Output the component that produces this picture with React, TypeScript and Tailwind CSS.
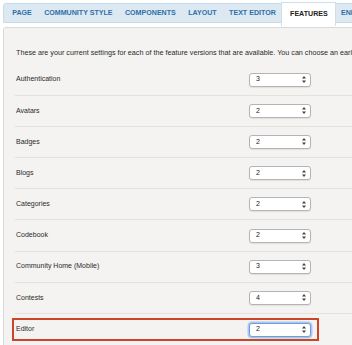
import React from "react";

const tabs = ["PAGE", "COMMUNITY STYLE", "COMPONENTS", "LAYOUT", "TEXT EDITOR", "FEATURES", "ENHANCED"];

const features = [
  { name: "Authentication", value: "3" },
  { name: "Avatars", value: "2" },
  { name: "Badges", value: "2" },
  { name: "Blogs", value: "2" },
  { name: "Categories", value: "2" },
  { name: "Codebook", value: "2" },
  { name: "Community Home (Mobile)", value: "3" },
  { name: "Contests", value: "4" },
  { name: "Editor", value: "2" },
];

const Arrows = () => (
  <svg width="4" height="7" viewBox="0 0 4 7" className="block">
    <path d="M2 0 L4 2.6 L0 2.6 Z" fill="#444" />
    <path d="M2 7 L4 4.4 L0 4.4 Z" fill="#444" />
  </svg>
);

const VersionSelect = ({ value, focused }: { value: string; focused?: boolean }) => (
  <div
    className={`flex h-[14px] w-[62px] items-center justify-between rounded-[3px] border bg-white pl-[6px] pr-[4px] text-[7px] text-[#222] ${
      focused
        ? "border-[#6d9fd8] shadow-[0_0_0_1.5px_#a9c8ef]"
        : "border-[#b4b4b4] shadow-[0_1px_1px_rgba(0,0,0,0.08)]"
    }`}
  >
    <span>{value}</span>
    <Arrows />
  </div>
);

const App: React.FC = () => {
  return (
    <div
      className="relative h-[345px] w-[352px] overflow-hidden bg-white"
      style={{ fontFamily: '"Liberation Sans", Arial, sans-serif' }}
    >
      <div className="w-[430px] pl-[3px] pt-[3px]">
        {/* tab strip */}
        <div className="flex h-[20px] items-stretch rounded-tl-[3px] border border-[#c8dbe9] bg-[#dde9f2] pl-[2px]">
          {tabs.map((t) => {
            const active = t === "FEATURES";
            return (
              <div
                key={t}
                className={`flex items-center whitespace-nowrap px-[6.2px] text-[7.1px] font-bold ${
                  active
                    ? "-mt-[2px] -mb-[4px] ml-[-1px] mr-[-1px] border-x border-t border-[#d0dfea] bg-white pl-[8px] pr-[7px] text-[#222]"
                    : "text-[#2f6fa6]"
                }`}
              >
                {t}
              </div>
            );
          })}
        </div>

        {/* settings panel */}
        <div className="mt-[4px] h-[330px] rounded-tl-[3px] border border-[#d9d9d9] bg-[#f4f3f1] pl-[11px]">
          <p className="pl-[1px] pt-[19.5px] text-[7.2px] leading-[9px] whitespace-nowrap text-[#2a2a2a]">
            These are your current settings for each of the feature versions that are available. You can choose an earlier version
          </p>
          <div className="mt-[8px]">
            {features.map((f, i) => {
              const highlighted = f.name === "Editor";
              return (
                <div
                  key={f.name}
                  className={`relative flex h-[31.2px] items-center ${
                    i < features.length - 1 ? "border-b border-[#e2e1de]" : ""
                  }`}
                >
                  <span className="w-[234px] pl-[1px] text-[7px] text-[#2a2a2a]">{f.name}</span>
                  <VersionSelect value={f.value} focused={highlighted} />
                  {highlighted && (
                    <div className="pointer-events-none absolute left-[-3px] top-[4px] h-[23px] w-[307px] border-2 border-[#cc4529]" />
                  )}
                </div>
              );
            })}
          </div>
        </div>
      </div>
    </div>
  );
};

export default App;
